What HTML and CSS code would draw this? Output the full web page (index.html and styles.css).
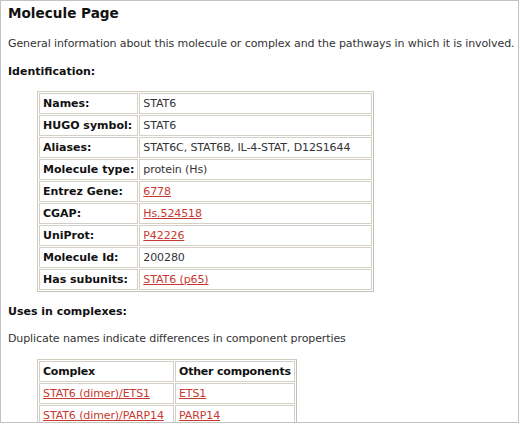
FILE: index.html
```html
<!DOCTYPE html>
<html>
<head>
<meta charset="utf-8">
<link rel="stylesheet" href="styles.css">
</head>
<body>
<div class="page">
  <h1 class="title">Molecule Page</h1>
  <p class="text intro">General information about this molecule or complex and the pathways in which it is involved.</p>
  <h2 class="section">Identification:</h2>
  <table class="grid ident">
    <tr><th>Names:</th><td>STAT6</td></tr>
    <tr><th>HUGO symbol:</th><td>STAT6</td></tr>
    <tr><th>Aliases:</th><td>STAT6C, STAT6B, IL-4-STAT, D12S1644</td></tr>
    <tr><th>Molecule type:</th><td>protein (Hs)</td></tr>
    <tr><th>Entrez Gene:</th><td><a href="#">6778</a></td></tr>
    <tr><th>CGAP:</th><td><a href="#">Hs.524518</a></td></tr>
    <tr><th>UniProt:</th><td><a href="#">P42226</a></td></tr>
    <tr><th>Molecule Id:</th><td>200280</td></tr>
    <tr><th>Has subunits:</th><td><a href="#">STAT6 (p65)</a></td></tr>
  </table>
  <h2 class="section uses">Uses in complexes:</h2>
  <p class="text dup">Duplicate names indicate differences in component properties</p>
  <table class="grid complexes">
    <tr><th>Complex</th><th>Other components</th></tr>
    <tr><td><a href="#">STAT6 (dimer)/ETS1</a></td><td><a href="#">ETS1</a></td></tr>
    <tr><td><a href="#">STAT6 (dimer)/PARP14</a></td><td><a href="#">PARP14</a></td></tr>
  </table>
</div>
</body>
</html>
```
FILE: styles.css
```css
html, body {
  margin: 0;
  padding: 0;
  background: #fff;
}
.page {
  box-sizing: border-box;
  width: 519px;
  height: 423px;
  overflow: hidden;
  border: 1px solid #c2c2c2;
  padding: 0 0 0 7px;
  font-family: "DejaVu Sans", Verdana, sans-serif;
  font-size: 11px;
  line-height: 14px;
  color: #333;
}
.title {
  margin: 3px 0 0;
  font-size: 13.6px;
  line-height: 18px;
  font-weight: bold;
  color: #111;
}
.text {
  margin: 0;
  letter-spacing: -0.1px;
}
.intro {
  margin-top: 15px;
}
.section {
  margin: 14px 0 0;
  font-size: 11px;
  line-height: 14px;
  font-weight: bold;
  color: #111;
}
.uses {
  margin-top: 13px;
}
.dup {
  margin-top: 13px;
}
.grid {
  margin: 12px 0 0 29px;
  border-collapse: separate;
  border-spacing: 1px;
  border: 1px solid #d0ccc0;
  border-right-color: #c4c0b4;
  border-bottom-color: #c4c0b4;
}
.complexes {
  margin-top: 13px;
}
.grid th,
.grid td {
  border: 1px solid #d4d0c8;
  padding: 3px 3px;
  line-height: 13px;
  text-align: left;
  white-space: nowrap;
}
.grid th {
  font-weight: bold;
  color: #111;
}
.complexes th {
  letter-spacing: -0.2px;
}
.grid td {
  letter-spacing: -0.1px;
}
.ident th { width: 86px; }
.ident td { width: 225px; }
.complexes th:first-child, .complexes td:first-child { width: 127px; }
.complexes th:last-child, .complexes td:last-child { width: 107px; }
.grid a {
  color: #c63a32;
  text-decoration: underline;
}
```
